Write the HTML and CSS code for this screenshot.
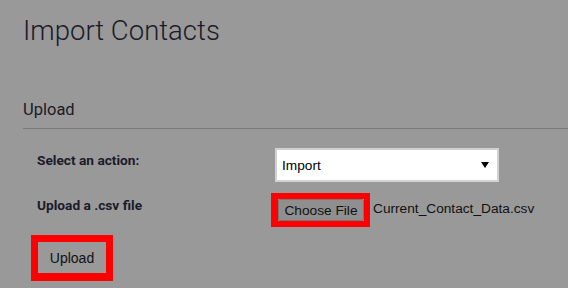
FILE: index.html
```html
<!DOCTYPE html>
<html lang="en">
<head>
<meta charset="utf-8">
<title>Import Contacts</title>
<link rel="stylesheet" href="styles.css">
</head>
<body>
<div class="page">
  <h1 class="title">Import Contacts</h1>
  <h2 class="section">Upload</h2>
  <form class="form">
    <div class="label">Select an action:</div>
    <div class="control">
      <div class="select">
        <span>Import</span>
        <svg class="arrow" width="8" height="6" viewBox="0 0 8 6"><path d="M0 0H8L4 6Z" fill="#000"/></svg>
      </div>
    </div>
    <div class="label">Upload a .csv file</div>
    <div class="control file-row">
      <span class="mark mark-small"><span class="btn-file">Choose File</span></span>
      <span class="filename">Current_Contact_Data.csv</span>
    </div>
    <div class="submit-row">
      <span class="mark mark-big"><span class="btn-upload">Upload</span></span>
    </div>
  </form>
</div>
</body>
</html>
```

FILE: styles.css
```css
html, body {
  margin: 0;
  padding: 0;
  background: #999999;
}

.page {
  padding-left: 23px;
  font-family: Roboto, "Noto Sans", sans-serif;
  color: #1b1b29;
}

.title {
  margin: 16px 0 0;
  font-size: 27.5px;
  line-height: 30px;
  font-weight: 300;
}

.section {
  margin: 54px 0 0;
  padding-bottom: 8px;
  font-size: 16.5px;
  line-height: 20px;
  font-weight: 400;
  border-bottom: 1px solid #7a7a7a;
}

.form {
  margin-top: 19px;
  padding-left: 14px;
  display: grid;
  grid-template-columns: 238px 1fr;
  row-gap: 11px;
}

.label {
  padding-top: 4px;
  font-size: 13.7px;
  line-height: 17px;
  font-weight: 700;
}

.control {
  display: flex;
  align-items: center;
}

.select {
  box-sizing: border-box;
  width: 224px;
  height: 34px;
  border: 2px solid #d2d2d2;
  background: #ffffff;
  display: flex;
  align-items: center;
  justify-content: space-between;
  padding: 0 8px 0 5px;
  font-family: "Liberation Sans", Arial, sans-serif;
  font-size: 13.7px;
  color: #000;
}

.mark {
  display: inline-flex;
  border: solid #ff0000;
}

.mark-small {
  border-width: 6px 6px 6px 7px;
  margin-left: -4px;
}

.btn-file {
  box-sizing: border-box;
  width: 86px;
  height: 22px;
  border: 1px solid #777777;
  border-radius: 2px;
  background: #8f8f8f;
  display: flex;
  align-items: center;
  justify-content: center;
  font-family: "Liberation Sans", Arial, sans-serif;
  font-size: 13.7px;
  color: #111;
}

.filename {
  margin-left: 3px;
  margin-top: -3px;
  font-family: "Liberation Sans", Arial, sans-serif;
  font-size: 13.7px;
  color: #111;
}

.submit-row {
  grid-column: 1 / -1;
  margin-top: -3px;
  margin-left: -6px;
}

.mark-big {
  border-width: 7px 7px 8px 7px;
}

.btn-upload {
  box-sizing: border-box;
  width: 68px;
  height: 31px;
  display: flex;
  align-items: center;
  justify-content: center;
  font-family: "Liberation Sans", Arial, sans-serif;
  font-size: 14px;
  color: #111;
}
```
